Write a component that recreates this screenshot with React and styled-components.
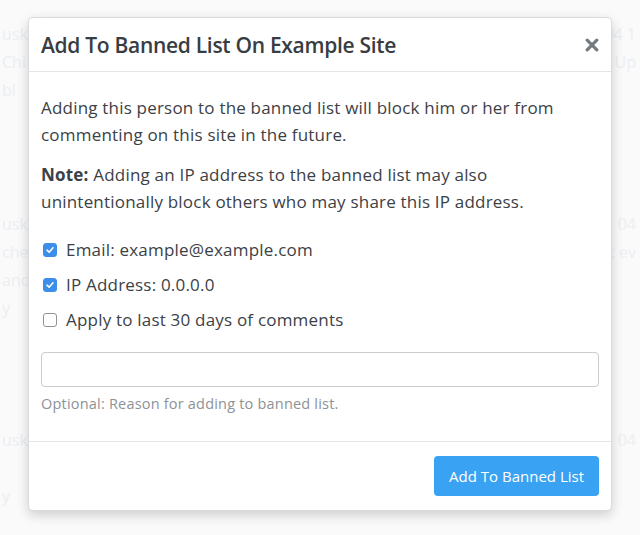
import React from 'react';
import styled, { createGlobalStyle } from 'styled-components';

const GlobalStyle = createGlobalStyle`
  html, body {
    margin: 0;
    padding: 0;
    background: #fafafb;
    font-family: "Open Sans", "Liberation Sans", sans-serif;
  }
`;

const Page = styled.div`
  position: relative;
  width: 640px;
  height: 535px;
  overflow: hidden;
  background: #fafafb;
`;

const Backdrop = styled.div`
  display: flex;
  flex-direction: column;
  padding: 24px 0 0 0;
  color: #eceef1;
  font-size: 16px;
`;

const BgGroup = styled.div`
  display: flex;
  flex-direction: column;
  gap: 8px;
  height: ${p => p.$h}px;
`;

const BgRow = styled.div`
  display: flex;
  justify-content: space-between;
  height: 20px;
  line-height: 20px;
  padding: 0 4px 0 2px;
`;

const Modal = styled.div`
  position: absolute;
  left: 28px;
  top: 17px;
  width: 584px;
  height: 494px;
  box-sizing: border-box;
  background: #fff;
  border: 1px solid #d9dbde;
  border-radius: 5px;
  box-shadow: 0 4px 12px rgba(0, 0, 0, 0.18);
  display: flex;
  flex-direction: column;
  color: #3c4146;
`;

const Header = styled.div`
  height: 54px;
  box-sizing: border-box;
  display: flex;
  align-items: center;
  justify-content: space-between;
  padding: 0 9px 0 12px;
  border-bottom: 1px solid #e3e5e8;
`;

const Title = styled.h4`
  margin: 0;
  font-size: 21px;
  font-weight: 600;
  letter-spacing: -0.3px;
  color: #383d42;
`;

const Close = styled.button`
  border: 0;
  background: none;
  padding: 0;
  width: 20px;
  height: 20px;
  display: flex;
  align-items: center;
  justify-content: center;
  cursor: pointer;
`;

const Body = styled.div`
  flex: 1;
  padding: 22px 12px 0 12px;
  border-bottom: 1px solid #e3e5e8;
`;

const Para = styled.p`
  margin: 0 0 13px 0;
  font-size: 17px;
  letter-spacing: 0.2px;
  line-height: 27px;
`;

const CheckList = styled.div`
  display: flex;
  flex-direction: column;
  gap: 8px;
  margin-top: 21px;
`;

const CheckRow = styled.label`
  display: flex;
  align-items: center;
  gap: 9px;
  padding-left: 2px;
  font-size: 17px;
  letter-spacing: 0.2px;
  line-height: 27px;
`;

const Box = styled.span`
  width: 14px;
  height: 14px;
  box-sizing: border-box;
  border-radius: 3px;
  border: 1px solid ${p => (p.$on ? '#3d8ee8' : '#8f9499')};
  background: ${p => (p.$on ? '#3d8ee8' : '#fff')};
  display: flex;
  align-items: center;
  justify-content: center;
`;

const Input = styled.input`
  display: block;
  width: 100%;
  height: 35px;
  box-sizing: border-box;
  margin-top: 19px;
  border: 1px solid #c9ccd0;
  border-radius: 4px;
  font-size: 16px;
  font-family: inherit;
`;

const Help = styled.div`
  margin-top: 7px;
  font-size: 14.5px;
  letter-spacing: 0.2px;
  color: #8d9297;
`;

const Footer = styled.div`
  height: 68px;
  display: flex;
  align-items: center;
  justify-content: flex-end;
  padding: 0 12px;
`;

const Primary = styled.button`
  height: 40px;
  padding: 0 15px;
  border: 0;
  border-radius: 4px;
  background: #39a2f2;
  color: #fff;
  font-family: inherit;
  font-size: 15px;
  font-weight: 500;
`;

const Check = ({ on, children }) => (
  <CheckRow>
    <Box $on={on}>
      {on && (
        <svg width="10" height="10" viewBox="0 0 10 10">
          <path d="M2 5.2 L4.1 7.2 L8 2.8" fill="none" stroke="#fff" strokeWidth="1.6" strokeLinecap="round" strokeLinejoin="round" />
        </svg>
      )}
    </Box>
    {children}
  </CheckRow>
);

const bg = [
  { h: 190, rows: [['usk', '04 1'], ['Chi', 'Up'], ['bl', '']] },
  { h: 216, rows: [['usk', '04'], ['che', 'st ev'], ['and', ''], ['y', '']] },
  { h: 100, rows: [['usk', '04'], ['', ''], ['y', '']] },
];

export default function App() {
  return (
    <Page>
      <GlobalStyle />
      <Backdrop>
        {bg.map((g, i) => (
          <BgGroup key={i} $h={g.h}>
            {g.rows.map((r, j) => (
              <BgRow key={j}>
                <span>{r[0]}</span>
                <span>{r[1]}</span>
              </BgRow>
            ))}
          </BgGroup>
        ))}
      </Backdrop>
      <Modal>
        <Header>
          <Title>Add To Banned List On Example Site</Title>
          <Close aria-label="Close">
            <svg width="14" height="14" viewBox="0 0 14 14">
              <path d="M2.2 2.2 L11.8 11.8 M11.8 2.2 L2.2 11.8" stroke="#747a80" strokeWidth="3.2" strokeLinecap="round" />
            </svg>
          </Close>
        </Header>
        <Body>
          <Para>Adding this person to the banned list will block him or her from commenting on this site in the future.</Para>
          <Para><b>Note:</b> Adding an IP address to the banned list may also unintentionally block others who may share this IP address.</Para>
          <CheckList>
            <Check on>Email: example@example.com</Check>
            <Check on>IP Address: 0.0.0.0</Check>
            <Check>Apply to last 30 days of comments</Check>
          </CheckList>
          <Input type="text" />
          <Help>Optional: Reason for adding to banned list.</Help>
        </Body>
        <Footer>
          <Primary>Add To Banned List</Primary>
        </Footer>
      </Modal>
    </Page>
  );
}
